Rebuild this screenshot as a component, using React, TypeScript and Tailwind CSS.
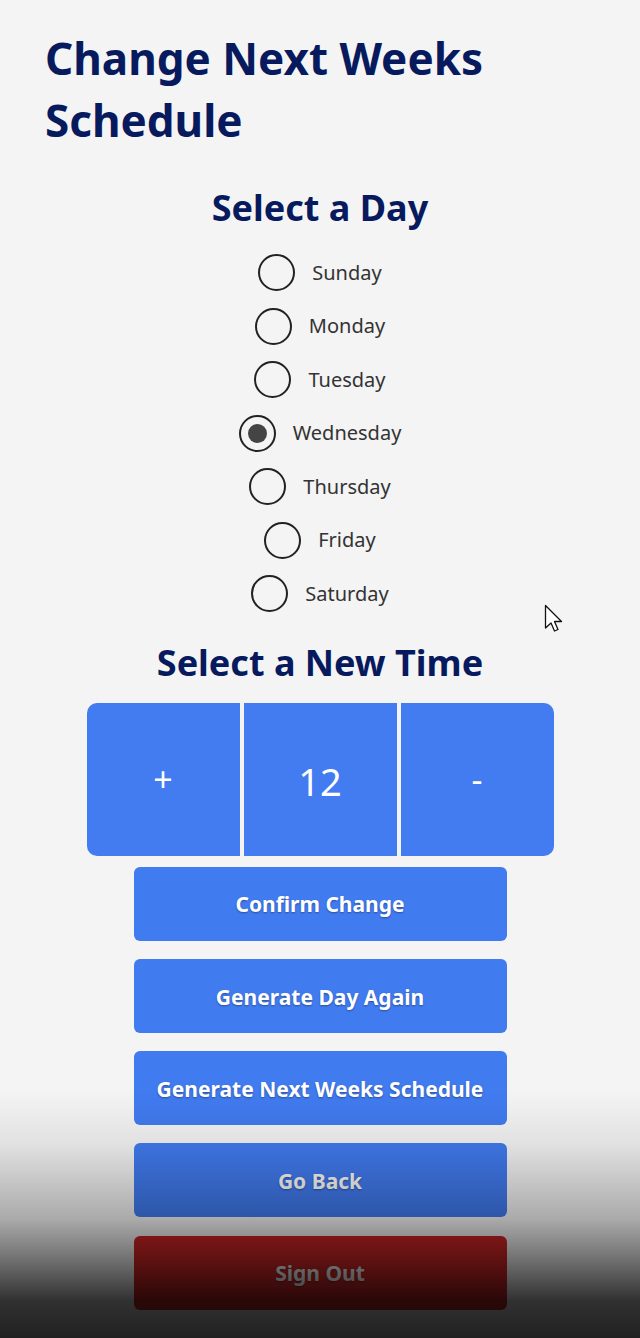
import { useState } from "react";

const days = ["Sunday", "Monday", "Tuesday", "Wednesday", "Thursday", "Friday", "Saturday"];

const font = { fontFamily: '"Noto Sans", "Open Sans", sans-serif' };

function ActionButton({ label, red }: { label: string; red?: boolean }) {
  return (
    <button
      className={`w-[373px] h-[74px] pt-[3px] rounded-md text-white text-[21px] font-bold [text-shadow:0_1px_2px_rgba(0,0,0,0.35)] ${
        red ? "bg-[#cf2525]" : "bg-[#417bf0]"
      }`}
    >
      {label}
    </button>
  );
}

export default function App() {
  const [day, setDay] = useState("Wednesday");
  const [hour, setHour] = useState(12);

  return (
    <div className="relative min-h-screen h-[1338px] overflow-hidden bg-[#f4f4f4]" style={font}>
      <h1 className="px-[45px] pt-[27px] text-[44px] leading-[62px] font-bold text-[#071a5e]">
        Change Next Weeks Schedule
      </h1>

      <h2 className="mt-[37px] text-center text-[36px] leading-[40px] font-bold text-[#071a5e]">
        Select a Day
      </h2>

      {/* Day radios */}
      <div className="mt-[18px] flex flex-col items-center">
        {days.map((d) => (
          <label key={d} className="h-[53.5px] flex items-center gap-[17px] cursor-pointer" onClick={() => setDay(d)}>
            <span className="w-[37px] h-[37px] rounded-full border-2 border-[#222] flex items-center justify-center">
              {day === d && <span className="w-[19px] h-[19px] rounded-full bg-[#444]" />}
            </span>
            <span className="text-[20px] text-[#333]">{d}</span>
          </label>
        ))}
      </div>

      <h2 className="mt-[22px] text-center text-[36px] leading-[40px] font-bold text-[#071a5e]">
        Select a New Time
      </h2>

      {/* Time picker */}
      <div className="mt-[20px] flex justify-center">
        <div className="flex gap-[4px]">
          <button
            onClick={() => setHour((h) => h + 1)}
            className="w-[153px] h-[153px] rounded-l-[10px] bg-[#437cf0] text-white text-[34px]"
          >
            +
          </button>
          <div className="w-[153px] h-[153px] pt-[4px] bg-[#437cf0] text-white text-[38px] flex items-center justify-center">
            {hour}
          </div>
          <button
            onClick={() => setHour((h) => h - 1)}
            className="w-[153px] h-[153px] rounded-r-[10px] bg-[#437cf0] text-white text-[34px]"
          >
            -
          </button>
        </div>
      </div>

      {/* Actions */}
      <div className="mt-[11px] flex flex-col items-center gap-[18.25px]">
        <ActionButton label="Confirm Change" />
        <ActionButton label="Generate Day Again" />
        <ActionButton label="Generate Next Weeks Schedule" />
        <ActionButton label="Go Back" />
        <ActionButton label="Sign Out" red />
      </div>

      {/* Mouse cursor */}
      <svg className="absolute left-[544px] top-[604px] w-[20px] h-[30px]" viewBox="0 0 20 30">
        <path d="M1.5 1.5 L1.5 24 L7 19 L10.5 27 L14 25.5 L10.5 17.5 L17.5 17.5 Z" fill="#fff" stroke="#111" strokeWidth="1.3" strokeLinejoin="round" />
      </svg>

      {/* Dark fade overlay at the bottom */}
      <div className="pointer-events-none absolute inset-x-0 bottom-0 h-[248px] bg-[linear-gradient(to_bottom,rgba(0,0,0,0)_0%,rgba(0,0,0,0.08)_22%,rgba(0,0,0,0.3)_52%,rgba(0,0,0,0.55)_69%,rgba(0,0,0,0.8)_85%,rgba(10,10,10,0.9)_100%)]" />
    </div>
  );
}
